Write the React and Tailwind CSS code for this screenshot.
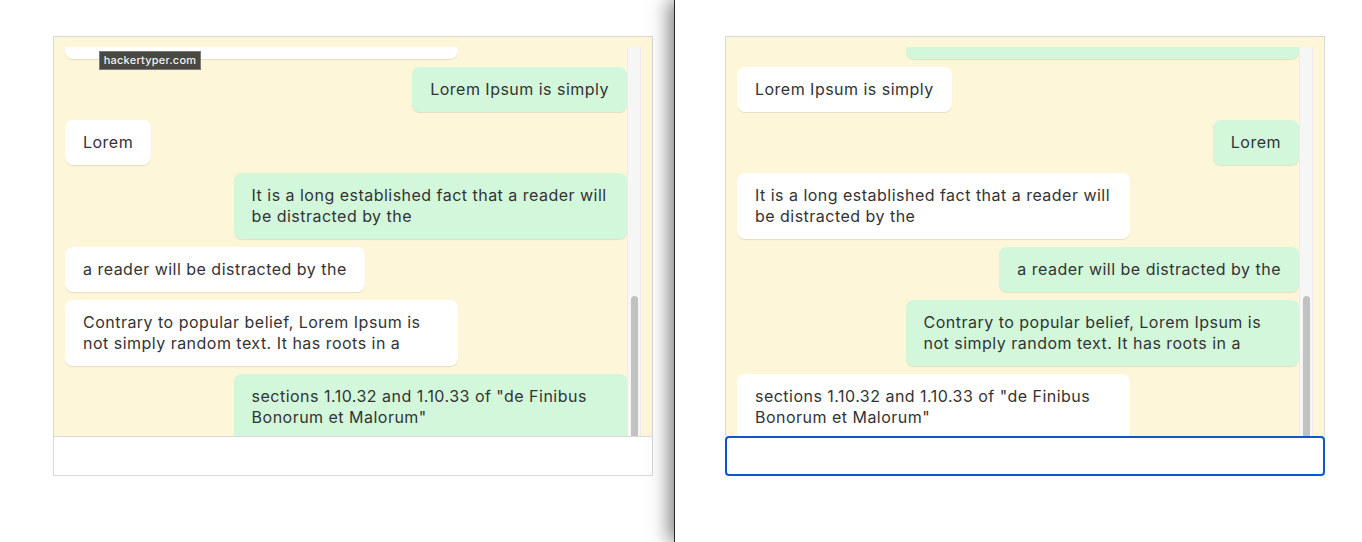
import React from "react";

const messages = [
  { mine: false, text: "It has survived not only five centuries, but also the leap into electronic" },
  { mine: true, text: "Lorem Ipsum is simply" },
  { mine: false, text: "Lorem" },
  { mine: true, text: "It is a long established fact that a reader will be distracted by the" },
  { mine: false, text: "a reader will be distracted by the" },
  { mine: false, text: "Contrary to popular belief, Lorem Ipsum is not simply random text. It has roots in a" },
  { mine: true, text: 'sections 1.10.32 and 1.10.33 of "de Finibus Bonorum et Malorum"' },
];

function Bubble({ text, mine }) {
  return (
    <div
      className={
        "max-w-[70%] mb-2 rounded-lg px-[18px] py-3 text-[16px] leading-[21px] tracking-[0.03em] text-[#333] shadow-[0_1px_1px_rgba(0,0,0,0.1)] " +
        (mine ? "self-end bg-[#d2f7db]" : "self-start bg-white")
      }
    >
      {text}
    </div>
  );
}

function Chat({ flip, focused }) {
  return (
    <div className="w-[600px] h-[440px] flex flex-col">
      <div className="flex-1 min-h-0 flex bg-[#fdf6d9] border border-b-0 border-[#d9d9d9] pt-[10px] px-[11px]">
        {/* messages, scrolled near the bottom */}
        <div className="flex-1 min-w-0 overflow-hidden">
          <div className="flex flex-col -mt-[54px]">
            {messages.map((m, i) => (
              <Bubble key={i} text={m.text} mine={flip ? !m.mine : m.mine} />
            ))}
          </div>
        </div>
        {/* scrollbar */}
        <div className="w-[14px] flex flex-col bg-[#f6f6f6] border-x border-[#ececec]">
          <div className="h-[249px]" />
          <div className="flex-1 w-[7px] mx-auto rounded-t-full bg-[#c1c1c1]" />
        </div>
      </div>
      {focused ? (
        <div className="h-[40px] bg-white border-2 border-[#0b57d0] rounded-[4px]" />
      ) : (
        <div className="h-[40px] bg-white border border-[#d9d9d9]" />
      )}
    </div>
  );
}

export default function App() {
  return (
    <div
      className="w-[1362px] h-[542px] flex bg-white overflow-hidden"
      style={{ fontFamily: "Inter, 'Noto Sans', sans-serif" }}
    >
      <div className="relative w-[674px] pl-[53px] pt-[36px]">
        <Chat />
        <div className="absolute left-[99px] top-[51px] w-[102px] h-[19px] flex items-center justify-center bg-[#4a4843] border border-[#7c7b77] text-[11px] leading-none font-medium tracking-[0.02em] text-[#f2f2f2]">
          hackertyper.com
        </div>
      </div>
      <div className="relative flex-1 bg-white border-l border-[#262626] pl-[50px] pt-[36px] shadow-[-5px_0_18px_rgba(0,0,0,0.5)]">
        <Chat flip focused />
      </div>
    </div>
  );
}
